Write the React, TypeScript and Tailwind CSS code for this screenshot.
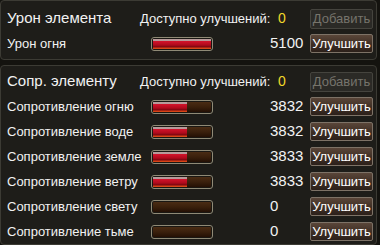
const resist = [
	{ name: 'Сопротивление огню', value: 3832, fill: 34 },
	{ name: 'Сопротивление воде', value: 3832, fill: 34 },
	{ name: 'Сопротивление земле', value: 3833, fill: 34 },
	{ name: 'Сопротивление ветру', value: 3833, fill: 34 },
	{ name: 'Сопротивление свету', value: 0, fill: 0 },
	{ name: 'Сопротивление тьме', value: 0, fill: 0 },
];

function Bar({ fill }: { fill: number }) {
	return (
		<div className="w-[62px] h-[14px] border border-[#8f8a76] rounded-[3px] p-px bg-[#1a1712]">
			<div className="h-full w-full rounded-[1px] bg-[linear-gradient(to_bottom,#4a2c14_0%,#3a200c_50%,#241004_100%)]">
				<div
					className="h-full bg-[linear-gradient(to_bottom,#b89a9a_0%,#b89a9a_18%,#d0122a_25%,#b00a1c_60%,#7a0610_80%,#e8501a_92%,#c03010_100%)]"
					style={{ width: fill }}
				/>
			</div>
		</div>
	);
}

function UpgradeButton() {
	return (
		<button className="w-[63px] h-[19px] border border-[#7d7266] rounded-[2px] bg-[linear-gradient(to_bottom,#5a4639_0%,#3e2e24_55%,#2c201a_100%)] text-white text-[13px] leading-none">
			Улучшить
		</button>
	);
}

function AddButton() {
	return (
		<button className="w-[63px] h-[20px] border border-[#45443e] rounded-[2px] bg-[#2b2a26] text-[#76746c] text-[13px] leading-none">
			Добавить
		</button>
	);
}

function Header({ title }: { title: string }) {
	return (
		<div className="flex items-center h-[25px]">
			<div className="w-[133px] text-[15px] text-[#f2f2f2]">{title}</div>
			<div className="w-[170px] text-[13px] text-[#f2f2f2]">
				Доступно улучшений: <span className="ml-1 text-[#f0d82a] text-[14px]">0</span>
			</div>
			<AddButton />
		</div>
	);
}

function Row({ name, value, fill }: { name: string; value: number; fill: number }) {
	return (
		<div className="flex items-center h-[25px]">
			<div className="w-[144px] text-[13px] text-[#f2f2f2] whitespace-nowrap">{name}</div>
			<Bar fill={fill} />
			<div className="w-[97px] pl-[57px] text-[15px] text-[#f2f2f2]">{value}</div>
			<UpgradeButton />
		</div>
	);
}

export default function App() {
	return (
		<div className="w-[380px] h-[245px] bg-[#14130f] font-['Liberation_Sans',Arial,sans-serif] overflow-hidden">
			<div className="w-[377px] h-[60px] border border-[#3c3b34] rounded-[4px] bg-[#1e1d19] pl-[6px] pt-[5px]">
				<Header title="Урон элемента" />
				<Row name="Урон огня" value={5100} fill={58} />
			</div>
			<div className="mt-[5px] w-[377px] h-[180px] border border-[#3c3b34] rounded-[4px] bg-[#1e1d19] pl-[6px] pt-[3px]">
				<Header title="Сопр. элементу" />
				{resist.map((r) => (
					<Row key={r.name} {...r} />
				))}
			</div>
		</div>
	);
}
